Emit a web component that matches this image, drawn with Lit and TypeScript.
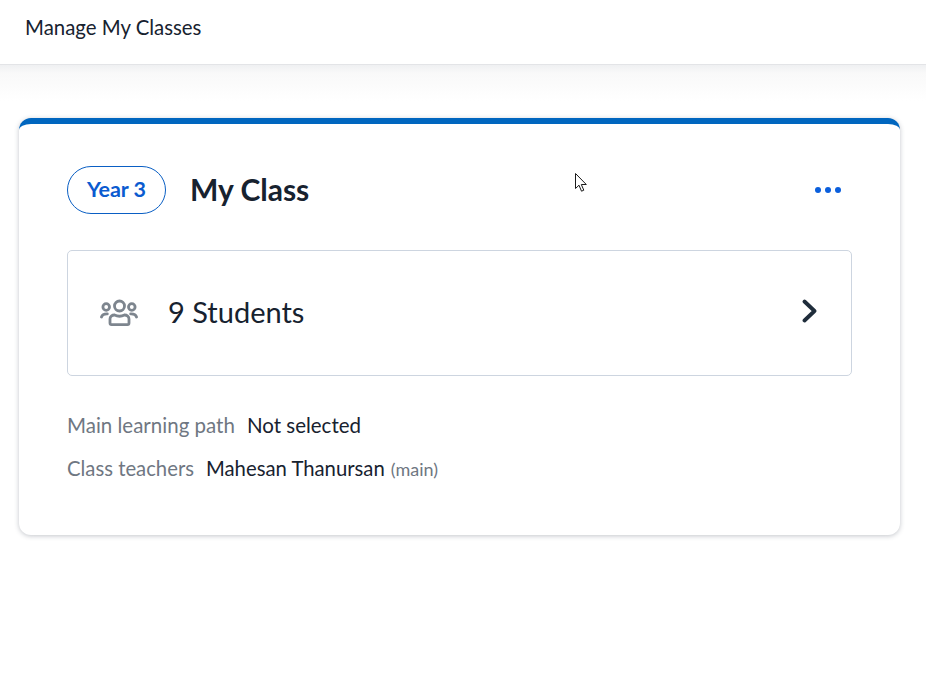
import { LitElement, html, css } from 'lit';
import { customElement } from 'lit/decorators.js';

@customElement('app-root')
export class AppRoot extends LitElement {
    static styles = css`
        :host {
            display: block;
            position: relative;
            height: 677px;
            background: #fff;
            overflow: hidden;
            font-family: Lato, "Liberation Sans", sans-serif;
            color: #17222f;
        }

        .topbar {
            height: 65px;
            box-sizing: border-box;
            padding: 0 25px 11px;
            display: flex;
            align-items: center;
            background: #fff;
            font-size: 20.4px;
            border-bottom: 1px solid #e3e4e7;
        }

        .content {
            padding: 53px 26px 0 19px;
            background: linear-gradient(#eff0f2 0, #f9f9f9 8px, #fff 36px);
            background-repeat: no-repeat;
        }

        .card {
            box-sizing: border-box;
            height: 417px;
            padding: 42px 48px 0;
            background: #fff;
            border-top: 6px solid #0066bf;
            border-radius: 12px;
            box-shadow: 0 1px 5px rgba(40, 50, 70, 0.28);
        }

        .head {
            display: flex;
            align-items: center;
            height: 48px;
        }

        .pill {
            width: 99px;
            height: 48px;
            box-sizing: border-box;
            padding-bottom: 2px;
            display: flex;
            align-items: center;
            justify-content: center;
            border: 1px solid #0a5fc4;
            border-radius: 24px;
            color: #0b5bd0;
            font-size: 21.5px;
            font-weight: 700;
        }

        h1 {
            flex: 1;
            margin: 0 0 0 24px;
            padding-bottom: 2px;
            font-size: 30px;
            font-weight: 700;
        }

        .more {
            display: flex;
            gap: 4px;
            margin-right: 11px;
        }

        .more i {
            width: 6px;
            height: 6px;
            border-radius: 50%;
            background: #0b5fdc;
        }

        .students {
            height: 126px;
            box-sizing: border-box;
            margin-top: 36px;
            padding: 0 32px;
            display: flex;
            align-items: center;
            border: 1px solid #cdd5e0;
            border-radius: 5px;
            font-size: 29px;
        }

        .students span {
            flex: 1;
            margin-left: 30px;
            padding-bottom: 4px;
        }

        .chevron {
            margin-bottom: 4px;
        }

        .meta {
            margin-top: 35px;
            display: grid;
            gap: 15px;
            font-size: 20.5px;
            line-height: 28px;
        }

        .row {
            display: flex;
            align-items: baseline;
        }

        .teachers {
            font-size: 20.3px;
        }

        .label {
            color: #6f7782;
            margin-right: 12px;
        }

        .note {
            color: #6f7782;
            font-size: 18px;
            margin-left: 6px;
        }

        .cursor {
            position: absolute;
            left: 575px;
            top: 173px;
        }
    `;

    render() {
        return html`
            <div class="topbar">Manage My Classes</div>
            <div class="content">
                <div class="card">
                    <div class="head">
                        <div class="pill">Year 3</div>
                        <h1>My Class</h1>
                        <div class="more"><i></i><i></i><i></i></div>
                    </div>
                    <div class="students">
                        <svg width="38" height="30" viewBox="0 0 38 30" fill="none" stroke="#7d858e" stroke-width="2.800" stroke-linecap="round">
                            <circle cx="19.500" cy="8" r="5" />
                            <circle cx="6.200" cy="9" r="3.300" />
                            <circle cx="31.800" cy="9" r="3.300" />
                            <path d="M1.500 19c.6-2 2.500-3.200 5.800-3.100M36.500 19c-.6-2-2.500-3.200-5.800-3.100" />
                            <path d="M10 25v-4c0-2.500 2-4 4.500-4 3 1.500 7 1.500 10 0 2.500 0 4.500 1.500 4.500 4v4c0 1-.6 1.600-1.500 1.600h-16c-.9 0-1.500-.6-1.500-1.600z" />
                        </svg>
                        <span>9 Students</span>
                        <svg class="chevron" width="18" height="24" viewBox="0 0 18 24" fill="none" stroke="#1f2d3b" stroke-width="3.800" stroke-linecap="round" stroke-linejoin="round">
                            <path d="M3.500 2.500l10 9.500-10 9.500" />
                        </svg>
                    </div>
                    <div class="meta">
                        <div class="row"><span class="label">Main learning path</span><span>Not selected</span></div>
                        <div class="row teachers"><span class="label">Class teachers</span><span>Mahesan Thanursan</span><span class="note">(main)</span></div>
                    </div>
                </div>
            </div>
            <svg class="cursor" width="13" height="20" viewBox="0 0 13 20">
                <path d="M.5.5v15l3.500-3.300 2.500 6 2.300-1-2.500-5.700h5z" fill="#fff" stroke="#1a1a1a" stroke-width="1" />
            </svg>
        `;
    }
}
